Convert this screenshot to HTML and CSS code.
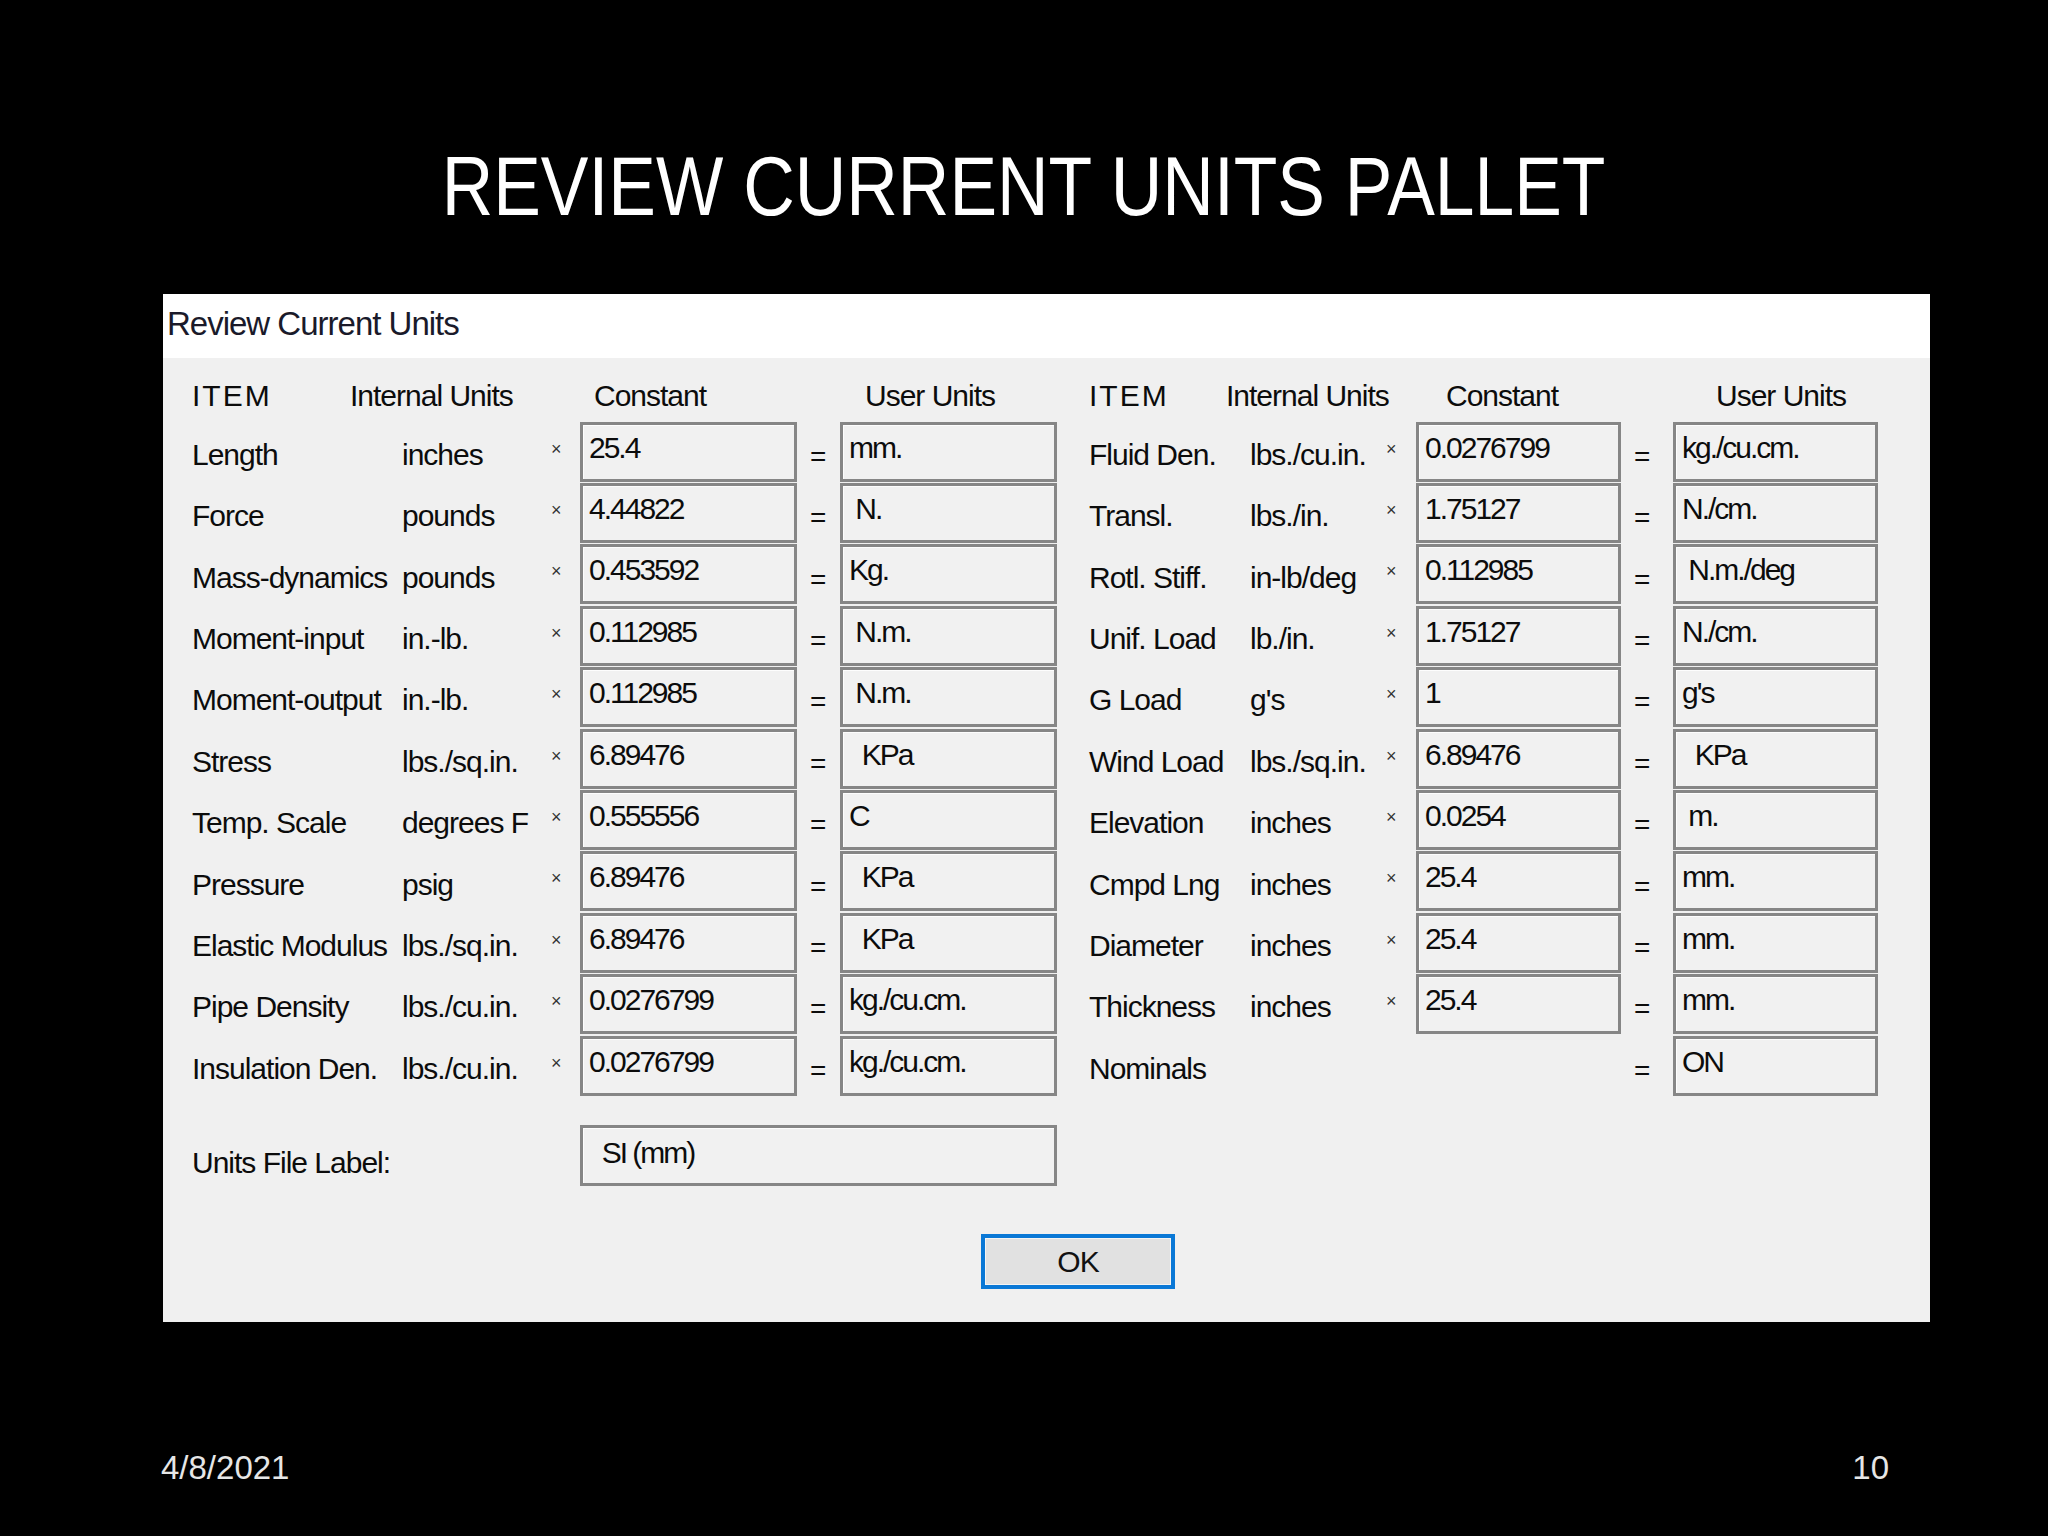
FILE: index.html
```html
<!DOCTYPE html>
<html lang="en">
<head>
<meta charset="utf-8">
<title>Review Current Units Pallet</title>
<link rel="stylesheet" href="styles.css">
</head>
<body>
<header class="slide-title"><h1><span>REVIEW CURRENT UNITS PALLET</span></h1></header>

<section class="dialog">
  <div class="titlebar">Review Current Units</div>
  <div class="dlg-body">
    <div class="halves">
      <div class="grid left">
        <div class="hd">ITEM</div><div class="hd h-int">Internal Units</div><div></div><div class="hd h-const">Constant</div><div></div><div class="hd h-user">User Units</div>

        <div class="lbl">Length</div><div class="lbl">inches</div><div class="x">×</div><div class="box">25.4</div><div class="eq">=</div><div class="box">mm.</div>
        <div class="lbl">Force</div><div class="lbl">pounds</div><div class="x">×</div><div class="box">4.44822</div><div class="eq">=</div><div class="box"> N.</div>
        <div class="lbl">Mass-dynamics</div><div class="lbl">pounds</div><div class="x">×</div><div class="box">0.453592</div><div class="eq">=</div><div class="box">Kg.</div>
        <div class="lbl">Moment-input</div><div class="lbl">in.-lb.</div><div class="x">×</div><div class="box">0.112985</div><div class="eq">=</div><div class="box"> N.m.</div>
        <div class="lbl">Moment-output</div><div class="lbl">in.-lb.</div><div class="x">×</div><div class="box">0.112985</div><div class="eq">=</div><div class="box"> N.m.</div>
        <div class="lbl">Stress</div><div class="lbl">lbs./sq.in.</div><div class="x">×</div><div class="box">6.89476</div><div class="eq">=</div><div class="box">  KPa</div>
        <div class="lbl">Temp. Scale</div><div class="lbl">degrees F</div><div class="x">×</div><div class="box">0.555556</div><div class="eq">=</div><div class="box">C</div>
        <div class="lbl">Pressure</div><div class="lbl">psig</div><div class="x">×</div><div class="box">6.89476</div><div class="eq">=</div><div class="box">  KPa</div>
        <div class="lbl">Elastic Modulus</div><div class="lbl">lbs./sq.in.</div><div class="x">×</div><div class="box">6.89476</div><div class="eq">=</div><div class="box">  KPa</div>
        <div class="lbl">Pipe Density</div><div class="lbl">lbs./cu.in.</div><div class="x">×</div><div class="box">0.0276799</div><div class="eq">=</div><div class="box">kg./cu.cm.</div>
        <div class="lbl">Insulation Den.</div><div class="lbl">lbs./cu.in.</div><div class="x">×</div><div class="box">0.0276799</div><div class="eq">=</div><div class="box">kg./cu.cm.</div>
      </div>

      <div class="grid right">
        <div class="hd">ITEM</div><div class="hd h-int">Internal Units</div><div></div><div class="hd h-const">Constant</div><div></div><div class="hd h-user">User Units</div>

        <div class="lbl">Fluid Den.</div><div class="lbl">lbs./cu.in.</div><div class="x">×</div><div class="box">0.0276799</div><div class="eq">=</div><div class="box">kg./cu.cm.</div>
        <div class="lbl">Transl.</div><div class="lbl">lbs./in.</div><div class="x">×</div><div class="box">1.75127</div><div class="eq">=</div><div class="box">N./cm.</div>
        <div class="lbl">Rotl. Stiff.</div><div class="lbl">in-lb/deg</div><div class="x">×</div><div class="box">0.112985</div><div class="eq">=</div><div class="box"> N.m./deg</div>
        <div class="lbl">Unif. Load</div><div class="lbl">lb./in.</div><div class="x">×</div><div class="box">1.75127</div><div class="eq">=</div><div class="box">N./cm.</div>
        <div class="lbl">G Load</div><div class="lbl">g's</div><div class="x">×</div><div class="box">1</div><div class="eq">=</div><div class="box">g's</div>
        <div class="lbl">Wind Load</div><div class="lbl">lbs./sq.in.</div><div class="x">×</div><div class="box">6.89476</div><div class="eq">=</div><div class="box">  KPa</div>
        <div class="lbl">Elevation</div><div class="lbl">inches</div><div class="x">×</div><div class="box">0.0254</div><div class="eq">=</div><div class="box"> m.</div>
        <div class="lbl">Cmpd Lng</div><div class="lbl">inches</div><div class="x">×</div><div class="box">25.4</div><div class="eq">=</div><div class="box">mm.</div>
        <div class="lbl">Diameter</div><div class="lbl">inches</div><div class="x">×</div><div class="box">25.4</div><div class="eq">=</div><div class="box">mm.</div>
        <div class="lbl">Thickness</div><div class="lbl">inches</div><div class="x">×</div><div class="box">25.4</div><div class="eq">=</div><div class="box">mm.</div>
        <div class="lbl">Nominals</div><div></div><div></div><div></div><div class="eq">=</div><div class="box">ON</div>
      </div>
    </div>

    <div class="file-row">
      <div class="lbl file-lbl">Units File Label:</div>
      <div class="box file-box">  SI (mm)</div>
    </div>

    <div class="btn-row">
      <div class="ok-btn">OK</div>
    </div>
  </div>
</section>

<footer class="slide-foot">
  <span>4/8/2021</span>
  <span>10</span>
</footer>
</body>
</html>
```

FILE: styles.css
```css
html, body {
  margin: 0;
  padding: 0;
}

body {
  width: 2048px;
  height: 1536px;
  background: #000;
  overflow: hidden;
  font-family: "Liberation Sans", Arial, sans-serif;
}

.slide-title {
  height: 294px;
  box-sizing: border-box;
  padding-top: 144px;
  text-align: center;
}

.slide-title h1 {
  margin: 0;
  font-weight: normal;
  font-size: 84px;
  line-height: 84px;
  color: #fff;
}

.slide-title h1 span {
  display: inline-block;
  transform: scaleX(0.85);
  transform-origin: center;
  white-space: nowrap;
}

.dialog {
  margin-left: 163px;
  width: 1767px;
  height: 1028px;
  background: #f0f0f0;
  color: #0c0c0c;
  display: flex;
  flex-direction: column;
}

.titlebar {
  height: 64px;
  box-sizing: border-box;
  background: #fff;
  display: flex;
  align-items: center;
  padding: 0 0 4px 4px;
  font-size: 33px;
  letter-spacing: -1px;
  color: #1a1a2a;
}

.dlg-body {
  padding: 12px 52px 33px 29px;
}

.halves {
  display: flex;
  gap: 32px;
}

.grid {
  display: grid;
  grid-template-rows: 52px repeat(11, 61.4px);
  font-size: 30px;
  letter-spacing: -1px;
}

.grid.left {
  grid-template-columns: 210px 143px 35px 217px 43px 217px;
}

.grid.right {
  grid-template-columns: 161px 130px 36px 205px 52px 205px;
}

.hd {
  display: flex;
  align-items: center;
  white-space: nowrap;
}

.hd:first-child {
  letter-spacing: 2px;
}

.left .h-int { margin-left: -52px; }
.right .h-int { margin-left: -24px; }
.left .h-const { padding-left: 14px; }
.right .h-const { padding-left: 30px; }
.left .h-user { padding-left: 25px; }
.right .h-user { padding-left: 43px; }

.lbl {
  display: flex;
  align-items: center;
  padding-top: 5px;
  white-space: nowrap;
}

.x {
  font-size: 18px;
  padding-left: 6px;
  padding-top: 17px;
  color: #333;
}

.eq {
  display: flex;
  align-items: center;
  padding-left: 13px;
  padding-top: 9px;
  font-size: 28px;
}

.box {
  height: 60px;
  box-sizing: border-box;
  border: 3px solid #868686;
  box-shadow: inset 1px 1px 0 #fdfdfd;
  background: #f1f1f1;
  padding: 8px 6px 0;
  line-height: 30px;
  letter-spacing: -2px;
  white-space: pre;
  overflow: hidden;
}

.file-row {
  display: flex;
  align-items: center;
  margin-top: 28px;
  font-size: 30px;
  letter-spacing: -1px;
}

.file-lbl {
  width: 388px;
  padding-top: 14px;
}

.file-box {
  width: 477px;
  height: 61px;
  padding-top: 10px;
}

.btn-row {
  display: flex;
  margin-top: 48px;
  padding-left: 789px;
}

.ok-btn {
  width: 194px;
  height: 55px;
  box-sizing: border-box;
  border: 4px solid #0a78d6;
  box-shadow: inset 0 0 0 1px #f4f4f4;
  background: #e1e1e1;
  display: flex;
  align-items: center;
  justify-content: center;
  font-size: 30px;
  letter-spacing: -1px;
  color: #111;
}

.slide-foot {
  display: flex;
  justify-content: space-between;
  margin-top: 129px;
  padding: 0 159px 0 161px;
  font-size: 33px;
  line-height: 33px;
  color: #e6e6e6;
}
```
